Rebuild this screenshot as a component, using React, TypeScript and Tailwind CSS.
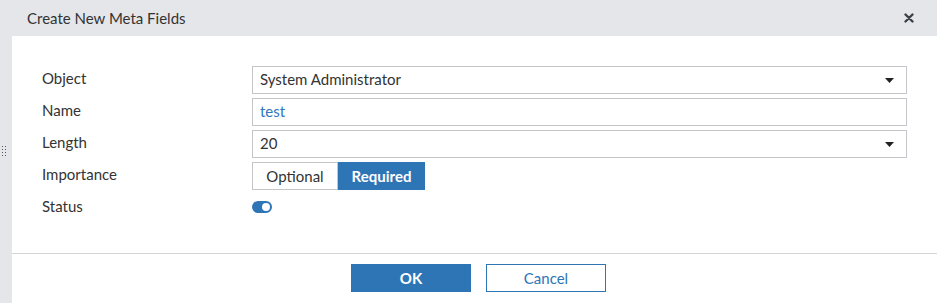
import { useState } from "react";

function Caret() {
  return (
    <svg width="9" height="5" viewBox="0 0 9 5" className="shrink-0">
      <path d="M0 0h9L4.5 5z" fill="#222" />
    </svg>
  );
}

function Row({ label, children }: { label: string; children: React.ReactNode }) {
  return (
    <div className="flex items-center h-[28px]">
      <div className="w-[210px] text-[15px] text-[#333] -mt-[4px]">{label}</div>
      <div className="flex-1 flex items-center">{children}</div>
    </div>
  );
}

export default function App() {
  const [importance, setImportance] = useState<"optional" | "required">("required");
  const [enabled, setEnabled] = useState(true);

  return (
    <div className="w-[937px] h-[303px] bg-[#e5e6ea] flex flex-col font-['Lato','Noto_Sans',sans-serif] text-[#333]">
      <div className="h-[36px] shrink-0 flex items-center justify-between pl-[27px] pr-[23px]">
        <span className="text-[15px] text-[#333]">Create New Meta Fields</span>
        <svg width="10" height="10" viewBox="0 0 10 10">
          <path d="M1.5 1.5l7 7M8.5 1.5l-7 7" stroke="#3c4148" strokeWidth="2.4" strokeLinecap="round" />
        </svg>
      </div>
      <div className="flex flex-1">
        <div className="w-[12px] shrink-0 flex flex-col items-start pl-[2px] pt-[110px]">
          <div className="grid grid-cols-2 gap-x-[2px] gap-y-[2px]">
            {Array.from({ length: 8 }).map((_, i) => (
              <span key={i} className="w-[1px] h-[1px] bg-[#555]" />
            ))}
          </div>
        </div>
        <div className="flex-1 bg-white flex flex-col">
          <div className="h-[218px] border-b border-[#d3d4d6] pt-[30px] pl-[30px] pr-[30px] flex flex-col gap-[4px]">
            <Row label="Object">
              <div className="flex-1 h-[28px] border border-[#c3c5c8] flex items-center justify-between pl-[7px] pr-[12px] text-[15px]">
                <span className="-mt-[2px]">System Administrator</span>
                <Caret />
              </div>
            </Row>
            <Row label="Name">
              <input
                defaultValue="test"
                className="flex-1 h-[28px] border border-[#c3c5c8] px-[7px] pb-[3px] text-[15px] text-[#2d78be] outline-none"
              />
            </Row>
            <Row label="Length">
              <div className="flex-1 h-[28px] border border-[#c3c5c8] flex items-center justify-between pl-[7px] pr-[12px] text-[15px]">
                <span className="-mt-[2px]">20</span>
                <Caret />
              </div>
            </Row>
            <Row label="Importance">
              <div className="flex h-[28px]">
                <button
                  onClick={() => setImportance("optional")}
                  className={
                    importance === "optional"
                      ? "w-[86px] h-full bg-[#2e75b6] text-white font-bold text-[15px]"
                      : "w-[86px] h-full border border-[#c3c5c8] text-[#333] text-[15px]"
                  }
                >
                  Optional
                </button>
                <button
                  onClick={() => setImportance("required")}
                  className={
                    importance === "required"
                      ? "w-[87px] h-full bg-[#2e75b6] text-white font-bold text-[15px]"
                      : "w-[87px] h-full border border-[#c3c5c8] text-[#333] text-[15px]"
                  }
                >
                  Required
                </button>
              </div>
            </Row>
            <Row label="Status">
              <button
                onClick={() => setEnabled(!enabled)}
                className={
                  enabled
                    ? "w-[20px] h-[12px] rounded-full bg-[#2e75b6] flex items-center justify-end pr-[2px] -mt-[2px]"
                    : "w-[20px] h-[12px] rounded-full bg-[#bbb] flex items-center justify-start pl-[2px] -mt-[2px]"
                }
              >
                <span className="w-[8px] h-[8px] rounded-full bg-white" />
              </button>
            </Row>
          </div>
          <div className="flex-1 flex items-center justify-center gap-[15px] pl-[8px] pb-[1px]">
            <button className="w-[120px] h-[28px] bg-[#2e75b6] text-white font-bold text-[15px]">OK</button>
            <button className="w-[120px] h-[28px] border border-[#2e75b6] text-[#2e75b6] text-[15px]">Cancel</button>
          </div>
        </div>
      </div>
    </div>
  );
}
